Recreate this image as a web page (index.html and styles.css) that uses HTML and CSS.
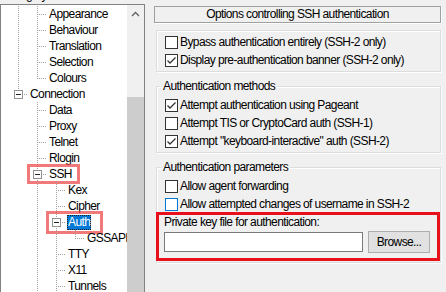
FILE: index.html
```html
<!DOCTYPE html>
<html lang="en">
<head>
    <meta charset="utf-8">
    <title>PuTTY Configuration - Auth</title>
    <link rel="stylesheet" href="styles.css">
</head>
<body>
    <div class="dialog">
        <div class="category">
            <p class="caption">Category:</p>
            <div class="tree">
                <div class="tree-list">
                    <!-- Window-rækken ligger over kanten, kun linjerne ses -->
                    <div class="row"><span class="ind vbox"><span class="expander"></span></span></div>
                    <div class="row"><span class="ind pipe"></span><span class="ind tee"></span><span class="txt">Appearance</span></div>
                    <div class="row"><span class="ind pipe"></span><span class="ind tee"></span><span class="txt">Behaviour</span></div>
                    <div class="row"><span class="ind pipe"></span><span class="ind tee"></span><span class="txt">Translation</span></div>
                    <div class="row"><span class="ind pipe"></span><span class="ind tee"></span><span class="txt">Selection</span></div>
                    <div class="row"><span class="ind pipe"></span><span class="ind end"></span><span class="txt">Colours</span></div>
                    <div class="row"><span class="ind endbox"><span class="expander"></span></span><span class="txt">Connection</span></div>
                    <div class="row"><span class="ind"></span><span class="ind tee"></span><span class="txt">Data</span></div>
                    <div class="row"><span class="ind"></span><span class="ind tee"></span><span class="txt">Proxy</span></div>
                    <div class="row"><span class="ind"></span><span class="ind tee"></span><span class="txt">Telnet</span></div>
                    <div class="row"><span class="ind"></span><span class="ind tee"></span><span class="txt">Rlogin</span></div>
                    <div class="row">
                        <span class="ind"></span>
                        <span class="mark"><span class="ind vbox"><span class="expander"></span></span><span class="txt">SSH</span></span>
                    </div>
                    <div class="row"><span class="ind"></span><span class="ind pipe"></span><span class="ind tee"></span><span class="txt">Kex</span></div>
                    <div class="row"><span class="ind"></span><span class="ind pipe"></span><span class="ind tee"></span><span class="txt">Cipher</span></div>
                    <div class="row">
                        <span class="ind"></span><span class="ind pipe"></span>
                        <span class="mark wide"><span class="ind vbox"><span class="expander"></span></span><span class="txt sel">Auth</span></span>
                    </div>
                    <div class="row"><span class="ind"></span><span class="ind pipe"></span><span class="ind pipe"></span><span class="ind end"></span><span class="txt">GSSAPI</span></div>
                    <div class="row"><span class="ind"></span><span class="ind pipe"></span><span class="ind tee"></span><span class="txt">TTY</span></div>
                    <div class="row"><span class="ind"></span><span class="ind pipe"></span><span class="ind tee"></span><span class="txt">X11</span></div>
                    <div class="row"><span class="ind"></span><span class="ind pipe"></span><span class="ind tee"></span><span class="txt">Tunnels</span></div>
                </div>
                <div class="scrollbar">
                    <div class="sb-btn">
                        <svg width="9" height="6" viewBox="0 0 9 6"><polyline points="1,5 4.5,1.5 8,5" fill="none" stroke="#606060" stroke-width="1.3"/></svg>
                    </div>
                    <div class="sb-track"></div>
                    <div class="sb-thumb"></div>
                </div>
            </div>
        </div>

        <div class="panel">
            <div class="panel-title">Options controlling SSH authentication</div>

            <fieldset class="group first">
                <label class="check"><span class="box"></span>Bypass authentication entirely (SSH-2 only)</label>
                <label class="check"><span class="box"><svg viewBox="0 0 11 11"><polyline points="1.5,5.5 4,8 9.5,2.5" fill="none" stroke="#333" stroke-width="1.3"/></svg></span>Display pre-authentication banner (SSH-2 only)</label>
            </fieldset>

            <fieldset class="group">
                <legend>Authentication methods</legend>
                <label class="check"><span class="box"><svg viewBox="0 0 11 11"><polyline points="1.5,5.5 4,8 9.5,2.5" fill="none" stroke="#333" stroke-width="1.3"/></svg></span>Attempt authentication using Pageant</label>
                <label class="check"><span class="box"></span>Attempt TIS or CryptoCard auth (SSH-1)</label>
                <label class="check"><span class="box"><svg viewBox="0 0 11 11"><polyline points="1.5,5.5 4,8 9.5,2.5" fill="none" stroke="#333" stroke-width="1.3"/></svg></span>Attempt "keyboard-interactive" auth (SSH-2)</label>
            </fieldset>

            <fieldset class="group last">
                <legend>Authentication parameters</legend>
                <label class="check"><span class="box"></span>Allow agent forwarding</label>
                <label class="check"><span class="box hover"></span>Allow attempted changes of username in SSH-2</label>
                <div class="keyfile">
                    <div class="keyfile-label">Private key file for authentication:</div>
                    <div class="keyfile-row">
                        <input class="keyfile-input" type="text">
                        <button class="browse">Browse...</button>
                    </div>
                </div>
            </fieldset>
        </div>
    </div>
</body>
</html>
```

FILE: styles.css
```css
        :root {
            --dv: repeating-linear-gradient(to bottom, #a0a0a0 0 1px, transparent 1px 2px);
            --dh: repeating-linear-gradient(to right, #a0a0a0 0 1px, transparent 1px 2px);
        }

        * {
            box-sizing: border-box;
        }

        body {
            margin: 0;
            background-color: #f0f0f0;
            font-family: "Liberation Sans", Arial, sans-serif;
            font-size: 12px;
            letter-spacing: -0.6px;
            color: #000;
            overflow: hidden;
        }

        .dialog {
            display: flex;
            width: 446px;
            height: 292px;
            overflow: hidden;
        }

        /* venstre side: kategori-træet */
        .category {
            width: 145px;
            flex: none;
        }

        .caption {
            margin: -12px 0 2px 3px;
            line-height: 14px;
        }

        .tree {
            display: flex;
            height: 300px;
            border: 1px solid #828282;
            background-color: #fff;
        }

        .tree-list {
            flex: 1;
            overflow: hidden;
            padding-left: 8px;
        }

        .tree-list .row:first-child {
            margin-top: -15px;
        }

        .row {
            display: flex;
            align-items: center;
            height: 16px;
            white-space: nowrap;
        }

        .ind {
            flex: none;
            width: 19px;
            height: 16px;
            display: flex;
            align-items: flex-start;
        }

        .pipe {
            background: var(--dv) 9px 0 / 1px 100% no-repeat;
        }

        .tee {
            background: var(--dv) 9px 0 / 1px 100% no-repeat, var(--dh) 11px 8px / 8px 1px no-repeat;
        }

        .end {
            background: var(--dv) 9px 0 / 1px 9px no-repeat, var(--dh) 11px 8px / 8px 1px no-repeat;
        }

        .vbox {
            background: var(--dv) 9px 0 / 1px 100% no-repeat, var(--dh) 15px 8px / 4px 1px no-repeat;
        }

        .endbox {
            background: var(--dv) 9px 0 / 1px 5px no-repeat, var(--dh) 15px 8px / 4px 1px no-repeat;
        }

        .expander {
            width: 9px;
            height: 9px;
            margin: 4px 0 0 5px;
            border: 1px solid #919191;
            background-color: #fff;
            display: flex;
            align-items: center;
            justify-content: center;
        }

        .expander::before {
            content: "";
            width: 5px;
            height: 1px;
            background-color: #222;
        }

        .txt {
            margin-left: 1px;
            padding: 0 1px;
            line-height: 15px;
        }

        .sel {
            background-color: #0078d7;
            color: #fff;
            outline: 1px dotted #222;
            outline-offset: -1px;
        }

        .mark {
            display: flex;
            align-items: center;
            height: 18px;
            padding-right: 6px;
            outline: 3px solid rgba(236, 64, 64, 0.7);
            outline-offset: -2px;
        }

        .mark.wide {
            height: 21px;
            padding-right: 11px;
        }

        .scrollbar {
            width: 17px;
            flex: none;
            display: flex;
            flex-direction: column;
            background-color: #f0f0f0;
        }

        .sb-btn {
            height: 17px;
            display: flex;
            align-items: center;
            justify-content: center;
        }

        .sb-track {
            height: 75px;
        }

        .sb-thumb {
            flex: 1;
            background-color: #cdcdcd;
        }

        /* højre side: indstillinger */
        .panel {
            flex: 1;
            padding: 6px 5px 0 9px;
            display: flex;
            flex-direction: column;
        }

        .panel-title {
            height: 17px;
            line-height: 15px;
            text-align: center;
            border: 1px solid #a0a0a0;
            box-shadow: 1px 1px 0 #fff;
        }

        .group {
            margin: 7px 0 0 2px;
            padding: 3px 0 2px;
            min-width: 0;
            border: 1px solid #dcdcdc;
            box-shadow: inset 1px 1px 0 #fff, 1px 1px 0 #fff;
        }

        .group.first {
            padding-top: 2px;
        }

        .group.last {
            padding-bottom: 4px;
        }

        legend {
            margin-left: 4px;
            padding: 0 2px;
            line-height: 14px;
        }

        .check {
            display: flex;
            align-items: center;
            gap: 2px;
            height: 18px;
            padding-left: 8px;
            white-space: nowrap;
        }

        .box {
            flex: none;
            display: flex;
            width: 13px;
            height: 13px;
            border: 1px solid #333;
            background-color: #fff;
        }

        .box svg {
            width: 11px;
            height: 11px;
        }

        .box.hover {
            border-color: #0078d7;
        }

        .keyfile {
            margin: 2px 3px 0 2px;
            padding: 0 7px 5px 5px;
            outline: 3px solid #e8101a;
        }

        .keyfile-label {
            line-height: 14px;
        }

        .keyfile-row {
            display: flex;
            align-items: center;
            gap: 5px;
            height: 22px;
            margin-top: 2px;
        }

        .keyfile-input {
            flex: 1;
            min-width: 0;
            height: 20px;
            margin: 0;
            border: 1px solid #7a7a7a;
            background-color: #fff;
        }

        .browse {
            width: 62px;
            height: 22px;
            padding: 0;
            border: 1px solid #adadad;
            background-color: #e1e1e1;
            font: inherit;
            letter-spacing: inherit;
            color: #000;
        }
```
